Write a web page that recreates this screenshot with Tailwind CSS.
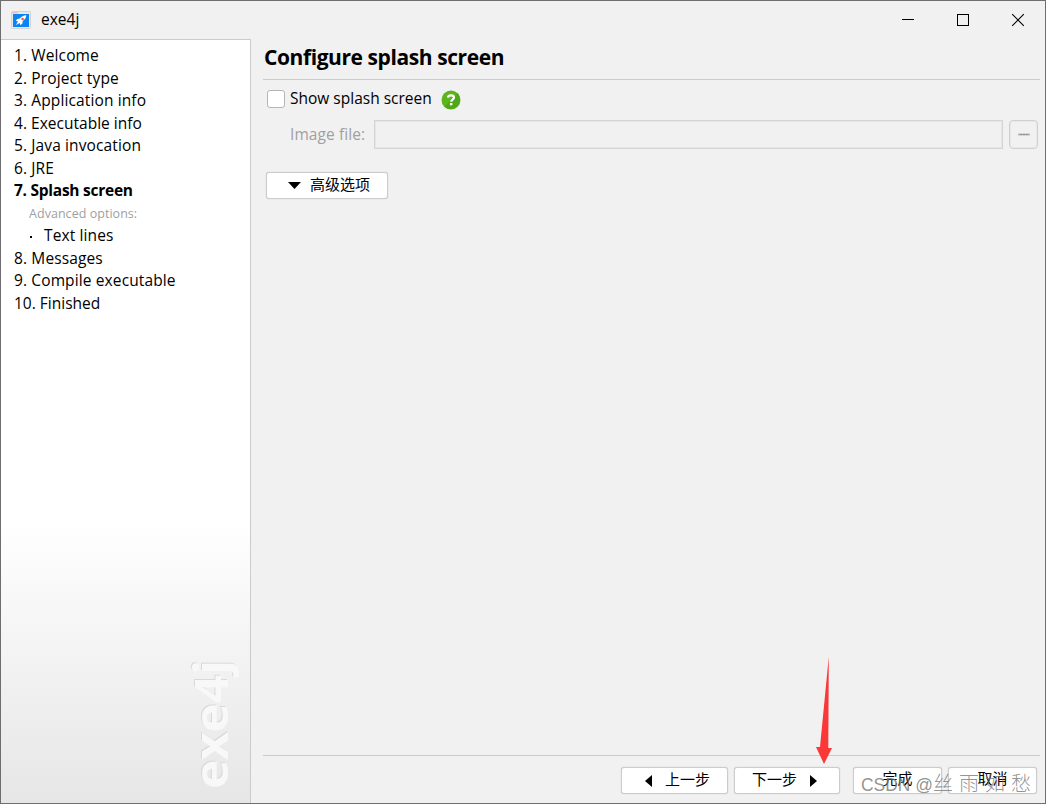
<!DOCTYPE html>
<html lang="en">
<head>
    <meta charset="UTF-8">
    <meta name="viewport" content="width=device-width, initial-scale=1">
    <title>exe4j</title>
    <script src="https://cdn.jsdelivr.net/npm/@tailwindcss/browser@4"></script>
</head>
<body class="overflow-hidden">
<div class="relative flex flex-col w-[1046px] h-[804px] border border-[#6e6d70] bg-[#f1f1f1] text-black text-[15.5px] font-['Open_Sans','Noto_Sans_CJK_SC',sans-serif]">

    <!-- title bar -->
    <header class="flex items-center h-[38px] shrink-0">
        <svg class="ml-[10px] w-5 h-[18px]" viewBox="0 0 20 18">
            <rect x="0.5" y="0.5" width="19" height="17" rx="1" fill="#e9e9e9" stroke="#d2d2d2"/>
            <rect x="2" y="3" width="16" height="13" fill="#0b84f3"/>
            <path d="M1.5 1.8h1M3.5 1.8h1M5.5 1.8h1" stroke="#ef7a6d" stroke-width="1"/>
            <path d="M15.300 4.200c-3 0-5 1.400-6.400 3.300L6.300 8l-1.500 2 2.200.2L5 14l3.800-2 .6 2.200 2-1.800.4-2.400c2-1.500 3.500-3.300 3.500-5.800z" fill="#fff"/>
            <circle cx="11.600" cy="8" r="1.200" fill="#e4523f"/>
        </svg>
        <span class="ml-[10px] text-[15.5px]">exe4j</span>
        <div class="ml-auto flex items-center mr-[20px] gap-[41px]">
            <svg class="w-[14px] h-[14px]" viewBox="0 0 14 14"><path d="M1 6.500h12" stroke="#000"/></svg>
            <svg class="w-[14px] h-[14px]" viewBox="0 0 14 14"><rect x="1.500" y="1.500" width="11" height="11" fill="none" stroke="#000"/></svg>
            <svg class="w-[14px] h-[14px]" viewBox="0 0 14 14"><path d="M1.200 1.200l11.600 11.600M12.800 1.200L1.200 12.800" stroke="#000" stroke-width="1.100"/></svg>
        </div>
    </header>

    <div class="flex flex-1 min-h-0">
        <!-- steps -->
        <aside class="relative w-[250px] shrink-0 border-t border-r border-[#cbcbcb] bg-linear-to-b from-white from-63% to-[#e6e6e6]">
            <ol class="pt-[4px] pl-[13px] leading-[22.5px] tracking-[0.12px] whitespace-nowrap">
                <li>1. Welcome</li>
                <li>2. Project type</li>
                <li>3. Application info</li>
                <li class="tracking-[0.02px]">4. Executable info</li>
                <li>5. Java invocation</li>
                <li>6. JRE</li>
                <li class="font-bold tracking-[-0.26px]">7. Splash screen</li>
                <li class="pl-[15px] text-[12.5px] leading-[22.5px] text-[#a0a0a0]"><span class="relative top-px tracking-[0.04px]">Advanced options:</span></li>
                <li class="flex items-center pl-[16px]"><i class="size-[2px] mt-[3px] bg-black"></i><span class="ml-[12px]">Text lines</span></li>
                <li>8. Messages</li>
                <li>9. Compile executable</li>
                <li class="tracking-normal">10. Finished</li>
            </ol>
            <svg class="absolute left-[180px] bottom-0 w-[66px] h-[160px]" viewBox="0 0 66 160">
                <text transform="translate(46 145) rotate(-90)" textLength="129" lengthAdjust="spacingAndGlyphs" font-family="Noto Sans" font-weight="700" font-size="47" fill="#d9d9d9">exe4j</text>
                <text transform="translate(47 146) rotate(-90)" textLength="129" lengthAdjust="spacingAndGlyphs" font-family="Noto Sans" font-weight="700" font-size="47" fill="#f8f8f8">exe4j</text>
            </svg>
        </aside>

        <main class="flex flex-col flex-1 pl-[12px] pr-[5px]">
            <h1 class="h-[41px] leading-[37px] pl-px text-[21px] tracking-[-0.42px] font-bold border-b border-[#cbcbcb]">Configure splash screen</h1>

            <div class="flex items-center h-[18px] mt-[10px] pl-[4px]">
                <span class="size-[18px] rounded-[3px] border-[1.5px] border-[#b5b5b5] bg-white"></span>
                <span class="ml-[5px] -mt-[2px] leading-[18px] w-[142px] whitespace-nowrap">Show splash screen</span>
                <svg class="ml-[9px] mt-[2px] w-5 h-5" viewBox="0 0 20 20">
                    <circle cx="10" cy="10" r="9.500" fill="#5cb51e"/>
                    <path d="M3.300 16.700A9.500 9.500 0 0 0 16.700 3.300z" fill="#4fa616"/>
                    <path d="M7 7.600c.1-3.100 6-3.100 6 0 0 2-2.800 2-2.800 4.200" fill="none" stroke="#fff" stroke-width="2.200"/>
                    <rect x="8.900" y="13" width="2.500" height="2.300" fill="#fff"/>
                </svg>
            </div>

            <div class="flex items-center h-[29px] mt-[12px] pl-[27px] pr-[2px]">
                <span class="w-[84px] -mt-px text-[#a0a0a0] leading-[28px] tracking-[0.08px]">Image file:</span>
                <span class="flex-1 h-[29px] border-[1.5px] border-[#d4d4d4] shadow-[inset_0_0_0_1px_#e6e6e6]"></span>
                <span class="flex items-center justify-center ml-[6px] w-[29px] h-[29px] rounded-[4px] border-[1.5px] border-[#d0d0d0] shadow-[inset_0_0_0_1px_#e8e8e8]">
                    <svg class="w-3 h-[3px]" viewBox="0 0 12 3"><path d="M0 1.500h12" stroke="#bbb" stroke-width="2"/><path d="M2 1.500h2M5 1.500h2M8 1.500h2" stroke="#888"/></svg>
                </span>
            </div>

            <button class="flex items-center w-[122px] h-[27px] mt-[23px] ml-[3px] pl-[21px] rounded-[3px] border border-[#cccccc] shadow-[0_0_1px_#bbb] bg-white text-[15px]">
                <svg class="w-[13px] h-[7px]" viewBox="0 0 13 7"><path d="M0 0h13L6.500 7z"/></svg>
                <span class="ml-[9px] -mt-[4px] leading-[24px]">高级选项</span>
            </button>

            <footer class="flex mt-auto h-[48px] pt-[11px] pr-[3px] border-t border-[#cbcbcb] text-[15px]">
                <button class="flex items-center ml-auto w-[107px] h-[27px] pl-[23px] rounded-[3px] border border-[#cccccc] shadow-[0_0_1px_#bbb] bg-white">
                    <svg class="w-[7px] h-[12px]" viewBox="0 0 7 12"><path d="M7 0v12L0 6z"/></svg>
                    <span class="ml-[13px] -mt-[4px] leading-[24px]">上一步</span>
                </button>
                <button class="flex items-center ml-[6px] w-[106px] h-[27px] pl-[17px] rounded-[3px] border border-[#cccccc] shadow-[0_0_1px_#bbb] bg-white">
                    <span class="-mt-[4px] leading-[24px]">下一步</span>
                    <svg class="ml-[13px] w-[7px] h-[12px]" viewBox="0 0 7 12"><path d="M0 0v12l7-6z"/></svg>
                </button>
                <button class="ml-[13px] w-[89px] h-[27px] pb-[4px] rounded-[3px] border border-[#cccccc] shadow-[0_0_1px_#bbb] bg-white leading-[21px]">完成</button>
                <button class="ml-[6px] w-[89px] h-[27px] pb-[4px] rounded-[3px] border border-[#cccccc] shadow-[0_0_1px_#bbb] bg-white leading-[21px]">取消</button>
            </footer>
        </main>
    </div>

    <!-- arrow pointing at the next button -->
    <svg class="absolute left-[814px] top-[654px] w-[20px] h-[110px]" viewBox="0 0 20 110">
        <path d="M13.800 1.500L13.300 93H17L9 109 1 92h4z" fill="#fb3838"/>
    </svg>

    <svg class="absolute left-[855px] top-[768px] w-[185px] h-[34px]" viewBox="0 0 185 34" font-family="Liberation Sans, Noto Sans CJK SC, sans-serif" font-size="18.500" font-weight="300" fill="#777" fill-opacity="0.8">
        <text x="5" y="22" textLength="72" lengthAdjust="spacingAndGlyphs">CSDN @</text>
        <text y="22" font-size="20"><tspan x="77">丝</tspan><tspan x="103">雨</tspan><tspan x="129">如</tspan><tspan x="155">愁</tspan></text>
    </svg>
</div>
</body>
</html>
